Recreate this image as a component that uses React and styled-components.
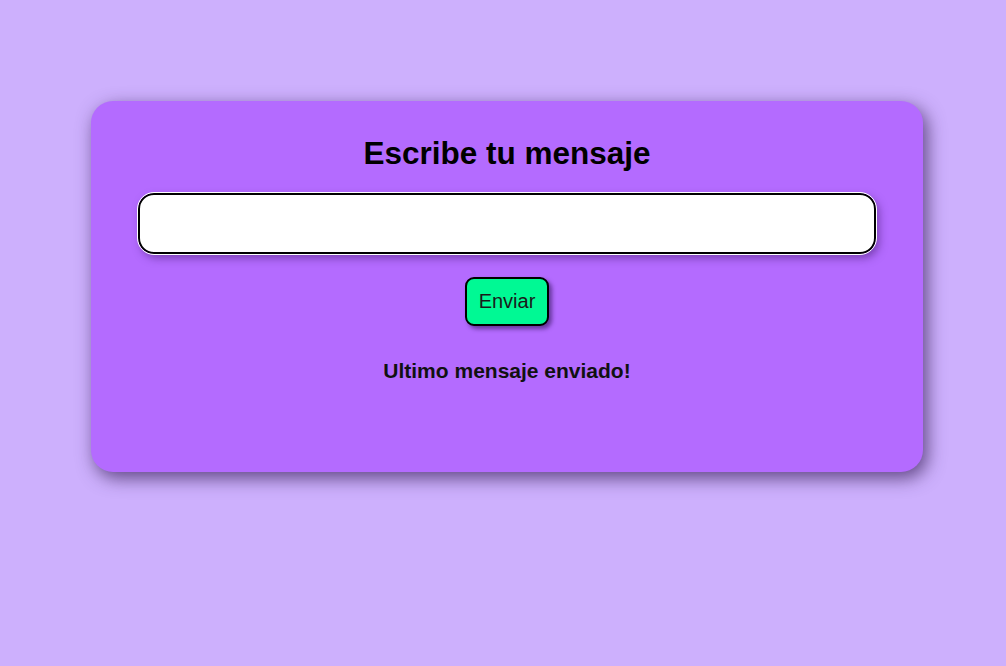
import React, { useState } from 'react';
import styled, { createGlobalStyle } from 'styled-components';

const GlobalStyle = createGlobalStyle`
  html, body {
    margin: 0;
    padding: 0;
    background: #cdb0fd;
    font-family: "Liberation Sans", Arial, sans-serif;
  }
`;

const Page = styled.div`
  min-height: 666px;
  padding: 101px 83px 0 91px;
  box-sizing: border-box;
`;

const Card = styled.div`
  background: #b46bff;
  border-radius: 22px;
  box-shadow: 4px 6px 18px rgba(50, 25, 80, 0.7);
  height: 371px;
  box-sizing: border-box;
  padding: 34px 47px 0;
  display: flex;
  flex-direction: column;
  align-items: center;
`;

const Title = styled.h1`
  margin: 0;
  font-size: 31.5px;
  font-weight: bold;
  color: #000;
`;

const MessageInput = styled.input`
  margin-top: 21px;
  width: 100%;
  height: 61px;
  box-sizing: border-box;
  border: 2px solid #000;
  border-radius: 16px;
  outline: 1px solid #fff;
  background: #fff;
  box-shadow: 3px 4px 8px rgba(60, 20, 100, 0.5);
  font-family: inherit;
  font-size: 18px;
  padding: 0 16px;
`;

const SendButton = styled.button`
  margin-top: 23px;
  width: 84px;
  height: 49px;
  background: #00f994;
  border: 2px solid #000;
  border-radius: 9px;
  box-shadow: 3px 3px 4px rgba(50, 20, 90, 0.6);
  font-family: inherit;
  font-size: 20px;
  color: #1a1a1a;
  cursor: pointer;
`;

const LastMessage = styled.p`
  margin: 33px 0 0;
  font-size: 21px;
  font-weight: bold;
  color: #111;
`;

export default function App() {
  const [text, setText] = useState('');
  const [last, setLast] = useState('');

  return (
    <>
      <GlobalStyle />
      <Page>
        <Card>
          <Title>Escribe tu mensaje</Title>
          <MessageInput value={text} onChange={(e) => setText(e.target.value)} />
          <SendButton
            onClick={() => {
              setLast(text);
              setText('');
            }}
          >
            Enviar
          </SendButton>
          <LastMessage>Ultimo mensaje enviado!{last && ` ${last}`}</LastMessage>
        </Card>
      </Page>
    </>
  );
}
